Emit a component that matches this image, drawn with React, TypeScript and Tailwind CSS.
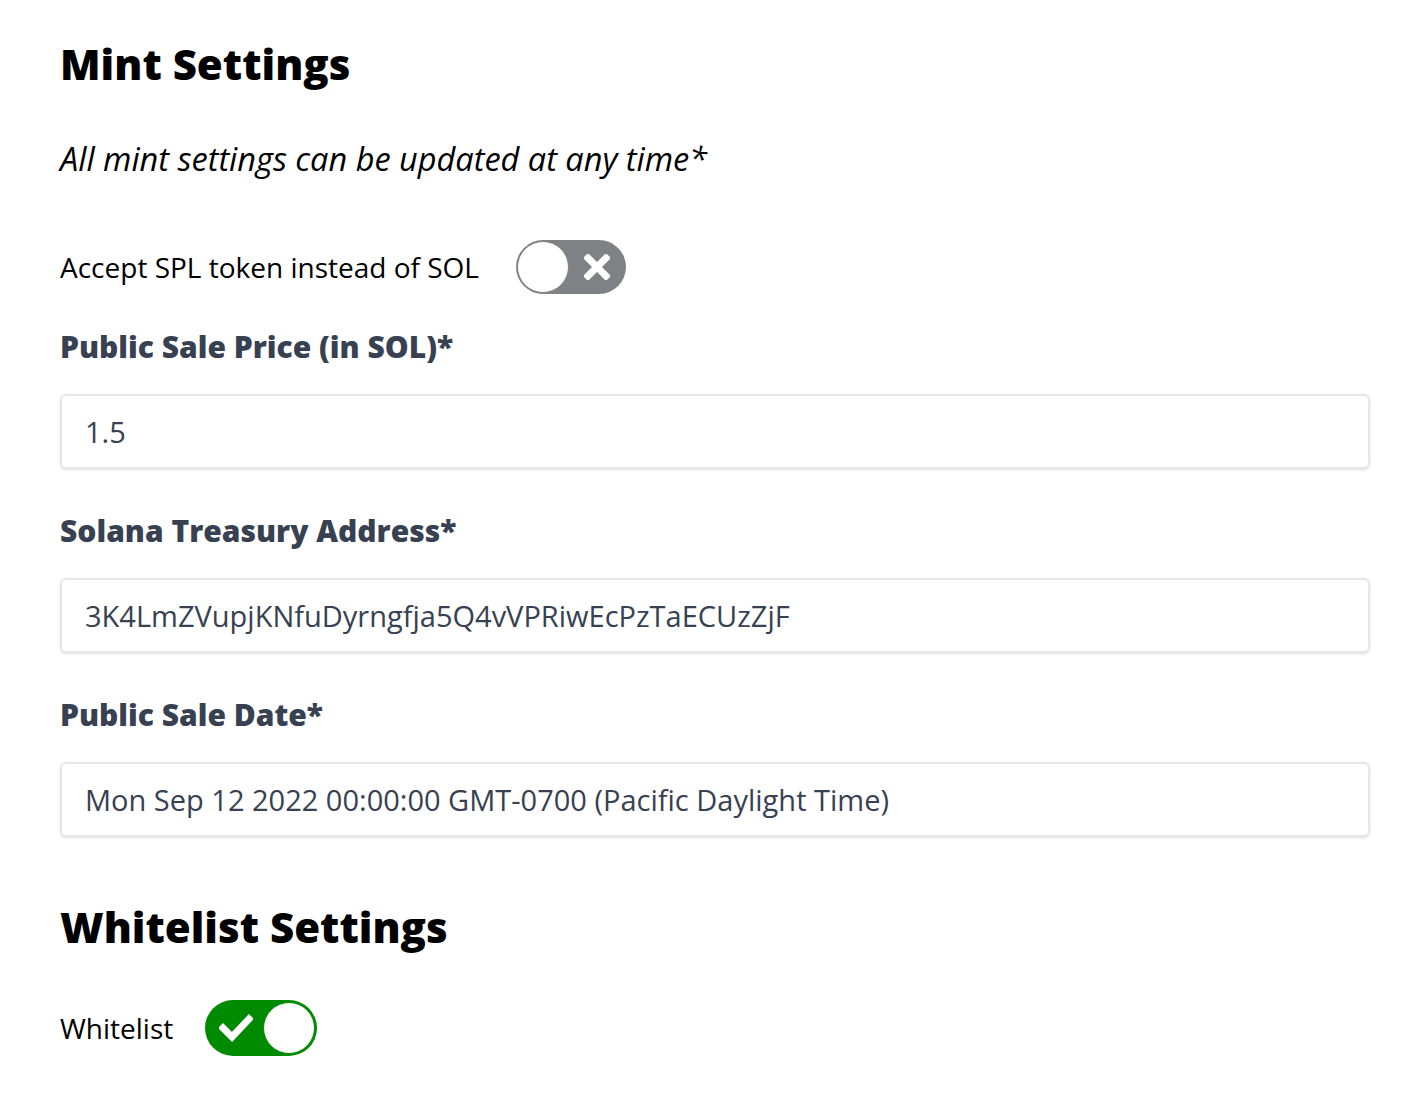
const font = { fontFamily: '"Open Sans", "Noto Sans", sans-serif' };

const Toggle = ({ on }: { on: boolean }) => {
  if (on) {
    return (
      <div className="flex h-[56px] w-[112px] items-center justify-between rounded-full bg-[#008a00] pl-[14px] pr-[2px]">
        <svg width="34" height="28" viewBox="0 0 34 28" fill="none">
          <path d="M4 14 L13 23 L30 5" stroke="white" strokeWidth="7" strokeLinecap="square" />
        </svg>
        <div className="h-[52px] w-[52px] rounded-full border border-[#008a00] bg-white" />
      </div>
    );
  }
  return (
    <div className="flex h-[54px] w-[110px] items-center justify-between rounded-full bg-[#808185] pl-[1px] pr-[16px]">
      <div className="h-[52px] w-[52px] rounded-full border border-[#808185] bg-white" />
      <svg width="26" height="26" viewBox="0 0 26 26" fill="none">
        <path d="M4 4 L22 22 M22 4 L4 22" stroke="white" strokeWidth="7" strokeLinecap="square" />
      </svg>
    </div>
  );
};

const Field = ({ label, value }: { label: string; value: string }) => (
  <div className="flex flex-col">
    <label className="text-[30px] font-extrabold leading-[40px] text-[#374151]">{label}</label>
    <div className="mt-[27px] flex h-[75px] items-center rounded-md border-2 border-[#e5e7eb] bg-white px-[23px] text-[29px] text-[#374151] shadow-sm">
      {value}
    </div>
  </div>
);

export default function App() {
  return (
    <div className="min-h-screen bg-white pl-[60px] pr-[58px] pt-[36px] text-black" style={font}>
      <h1 className="text-[42px] font-extrabold leading-[56px]">Mint Settings</h1>
      <p className="mt-[47px] text-[32.5px] italic leading-[40px]">All mint settings can be updated at any time*</p>

      <div className="mt-[61px] flex items-center gap-[37px]">
        <span className="text-[28px] leading-[40px]">Accept SPL token instead of SOL</span>
        <Toggle on={false} />
      </div>

      <div className="mt-[33px] flex flex-col gap-[42px]">
        <Field label="Public Sale Price (in SOL)*" value="1.5" />
        <Field label="Solana Treasury Address*" value="3K4LmZVupjKNfuDyrngfja5Q4vVPRiwEcPzTaECUzZjF" />
        <Field label="Public Sale Date*" value="Mon Sep 12 2022 00:00:00 GMT-0700 (Pacific Daylight Time)" />
      </div>

      <h2 className="mt-[62px] text-[42px] font-extrabold leading-[56px]">Whitelist Settings</h2>
      <div className="mt-[45px] flex items-center gap-[32px]">
        <span className="text-[28px] leading-[40px]">Whitelist</span>
        <Toggle on={true} />
      </div>
    </div>
  );
}
